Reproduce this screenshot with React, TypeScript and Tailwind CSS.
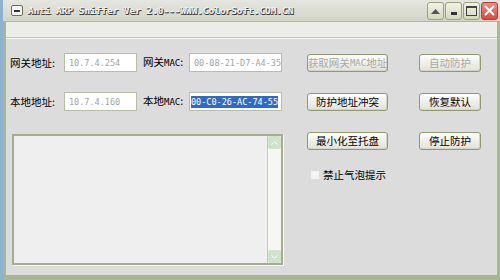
import React from "react";

const cjk = "font-['SimSun','Noto_Sans_CJK_SC',sans-serif]";

function XpButton({ children, disabled, wide }: { children: React.ReactNode; disabled?: boolean; wide?: boolean }) {
  return (
    <button
      type="button"
      className={`flex h-[18px] ${wide ? "w-[81px]" : "w-[62px]"} items-center justify-center whitespace-nowrap rounded-[3px] border border-[#8f9a6e] bg-gradient-to-b from-[#fdfdfb] to-[#e2e2da] text-[10.5px] leading-none ${cjk} ${
        disabled ? "text-[#a8a8a0]" : "text-black"
      } shadow-[inset_-1px_-1px_0_#d4d4c8]`}
    >
      {children}
    </button>
  );
}

function Field({ value, selected, w }: { value: string; selected?: boolean; w: string }) {
  return (
    <div className={`flex h-[19px] ${w} items-center border border-[#b9bda8] bg-white px-[1px]`}>
      <span
        className={`whitespace-nowrap font-['DejaVu_Sans_Mono',monospace] text-[8.5px] leading-[12px] ${
          selected ? "bg-[#316ac5] text-white" : "pl-[3px] text-[#a3a3a3]"
        }`}
      >
        {value}
      </span>
    </div>
  );
}

function TitleBtn({ children, red }: { children: React.ReactNode; red?: boolean }) {
  return (
    <div
      className={`flex h-[18px] w-[17px] items-center justify-center rounded-[3px] border ${
        red ? "border-[#b04038] bg-gradient-to-b from-[#f08a80] to-[#d84a40]" : "border-[#9aa27a] bg-gradient-to-b from-[#f2f2e4] to-[#d6d8bc]"
      }`}
    >
      {children}
    </div>
  );
}

const mac = "font-['DejaVu_Sans_Mono',monospace] text-[9px]";

export default function App() {
  return (
    <div className="flex h-[280px] w-[500px] bg-[#8fb0d0]">
      <div className="ml-[3px] flex h-[280px] flex-1 flex-col border-x-[3px] border-b-[5px] border-[#a7b88a] bg-[#dcdcdc]">
        {/* title bar */}
        <div className="-ml-[3px] -mr-[3px] flex h-[22px] items-center border-b border-[#b2b79a] bg-gradient-to-b from-[#e6e6e0] to-[#d2d4c8] pl-[8px] pr-[2px]">
          <div className="flex h-[11px] w-[12px] items-center justify-center rounded-[2px] border border-[#6a6a60] bg-[#f4f4f0]">
            <div className="h-[2px] w-[6px] bg-[#333]" />
          </div>
          <div className="ml-[5px] whitespace-nowrap font-['DejaVu_Sans_Mono',monospace] text-[9.4px] font-bold leading-none text-[#f4f4f0] [text-shadow:1px_1px_0_#404040,0_1px_0_#404040]">
            Anti ARP Sniffer Ver 2.0---WWW.ColorSoft.COM.CN
          </div>
          <div className="ml-auto flex items-center gap-[1px]">
            <TitleBtn>
              <svg width="9" height="6" viewBox="0 0 9 6"><path d="M0 6 L4.5 1 L9 6 Z" fill="#555" /></svg>
            </TitleBtn>
            <TitleBtn>
              <div className="mt-[6px] h-[3px] w-[6px] bg-[#333]" />
            </TitleBtn>
            <TitleBtn>
              <div className="h-[10px] w-[11px] border border-[#444] border-t-[2px]" />
            </TitleBtn>
            <TitleBtn red>
              <svg width="11" height="11" viewBox="0 0 11 11">
                <path d="M1.5 1.5 L9.5 9.5 M9.5 1.5 L1.5 9.5" stroke="#fff" strokeWidth="2" strokeLinecap="round" />
              </svg>
            </TitleBtn>
          </div>
        </div>
        {/* menu band */}
        <div className="h-[16px] border-b border-[#c4c4bc] bg-[#ecece8] shadow-[0_1px_0_#fafafa]" />

        {/* client */}
        <div className={`flex flex-1 ${cjk} text-[10.5px] text-black`}>
          <div className="ml-[4px] flex w-[279px] flex-col">
            <div className="mt-[15px] flex h-[19px] items-center whitespace-nowrap">
              <span className="w-[54px]">网关地址:</span>
              <Field value="10.7.4.254" w="w-[73px]" />
              <span className="ml-[6px] w-[46px]">网关<span className={mac}>MAC</span>:</span>
              <Field value="00-08-21-D7-A4-35" w="w-[93px]" />
            </div>
            <div className="mt-[20px] flex h-[19px] items-center whitespace-nowrap">
              <span className="w-[54px]">本地地址:</span>
              <Field value="10.7.4.160" w="w-[73px]" />
              <span className="ml-[6px] w-[46px]">本地<span className={mac}>MAC</span>:</span>
              <Field value="00-C0-26-AC-74-55" selected w="w-[93px]" />
            </div>
            <div className="ml-[2px] mt-[23px] flex h-[131px] w-[271px] border-2 border-[#a7ab90] bg-[#efefef] shadow-[1px_1px_0_#f8f8f4]">
              <div className="flex-1 border-r border-[#c8cab8]" />
              <div className="flex w-[13px] flex-col justify-between bg-[#f6f6f2]">
                <div className="flex h-[13px] items-center justify-center rounded-[2px] bg-[#cfe3cc]">
                  <svg width="7" height="4" viewBox="0 0 7 4"><path d="M0.5 3.5 L3.5 0.8 L6.5 3.5" stroke="#fff" fill="none" /></svg>
                </div>
                <div className="flex h-[13px] items-center justify-center rounded-[2px] bg-[#cfe3cc]">
                  <svg width="7" height="4" viewBox="0 0 7 4"><path d="M0.5 0.5 L3.5 3.2 L6.5 0.5" stroke="#fff" fill="none" /></svg>
                </div>
              </div>
            </div>
          </div>

          <div className="ml-[18px] mt-[16px] flex flex-col">
            <div className="flex gap-[31px]">
              <XpButton disabled wide>
                获取网关<span className={mac}>MAC</span>地址
              </XpButton>
              <XpButton disabled>自动防护</XpButton>
            </div>
            <div className="mt-[21px] flex gap-[31px]">
              <XpButton wide>防护地址冲突</XpButton>
              <XpButton>恢复默认</XpButton>
            </div>
            <div className="mt-[21px] flex gap-[31px]">
              <XpButton wide>最小化至托盘</XpButton>
              <XpButton>停止防护</XpButton>
            </div>
            <div className="ml-[4px] mt-[17px] flex items-center gap-[4px]">
              <div className="h-[8px] w-[8px] bg-[#f4f4f4]" />
              <span>禁止气泡提示</span>
            </div>
          </div>
        </div>
      </div>
    </div>
  );
}
